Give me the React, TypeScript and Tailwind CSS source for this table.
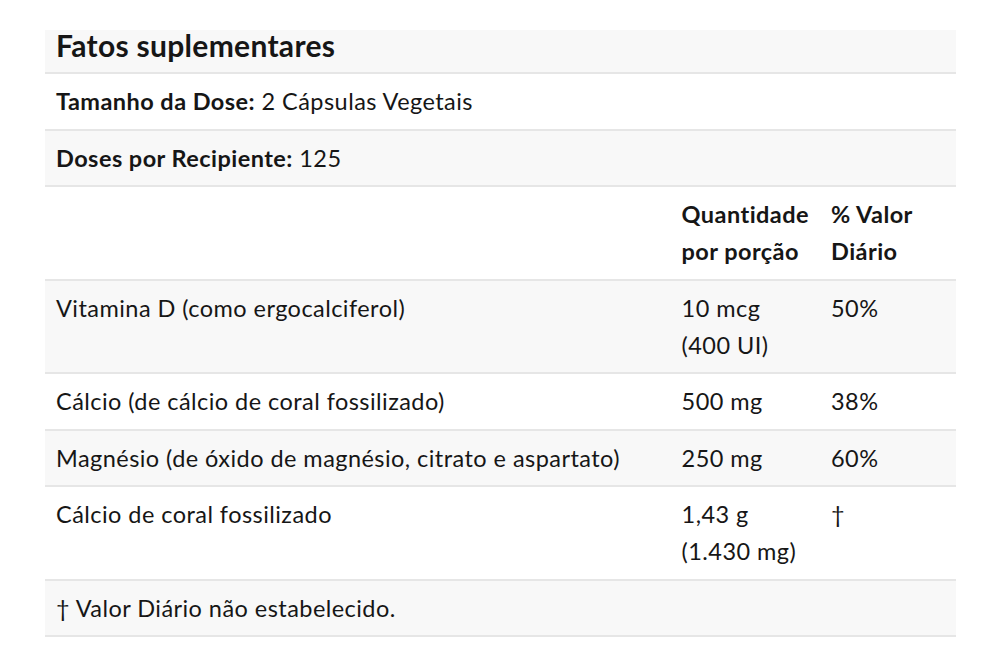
import React from "react";

interface Nutrient {
  name: string;
  amount: string[];
  dv: string;
}

const nutrients: Nutrient[] = [
  { name: "Vitamina D (como ergocalciferol)", amount: ["10 mcg", "(400 UI)"], dv: "50%" },
  { name: "Cálcio (de cálcio de coral fossilizado)", amount: ["500 mg"], dv: "38%" },
  { name: "Magnésio (de óxido de magnésio, citrato e aspartato)", amount: ["250 mg"], dv: "60%" },
  { name: "Cálcio de coral fossilizado", amount: ["1,43 g", "(1.430 mg)"], dv: "†" },
];

const cell = "px-[11px] pt-[9px] pb-[8.5px] align-top";

const App = () => {
  return (
    <main className="min-h-[670px] w-[1001px] bg-white pt-[30px] pl-[45px] font-['Lato','Liberation_Sans',sans-serif] text-[23.5px] leading-[37px] tracking-[0.45px] text-[#161616]">
      <table className="w-[911px] border-collapse">
        <colgroup>
          <col className="w-[626px]" />
          <col className="w-[149px]" />
          <col className="w-[136px]" />
        </colgroup>
        <tbody>
          <tr className="border-b-2 border-[#e6e6e6] bg-[#f8f8f8]">
            <td colSpan={3} className="h-[43px] px-[11px] align-top text-[30px] font-bold leading-[30px] tracking-[0.3px]">
              Fatos suplementares
            </td>
          </tr>
          <tr className="border-b-2 border-[#e6e6e6] bg-white">
            <td colSpan={3} className={cell}>
              <span className="font-bold">Tamanho da Dose:</span> 2 Cápsulas Vegetais
            </td>
          </tr>
          <tr className="border-b-2 border-[#e6e6e6] bg-[#f8f8f8]">
            <td colSpan={3} className={cell}>
              <span className="font-bold">Doses por Recipiente:</span> 125
            </td>
          </tr>
          <tr className="border-b-2 border-[#e6e6e6] bg-white font-bold">
            <td className={cell}></td>
            <td className={cell}>Quantidade por porção</td>
            <td className={cell}>% Valor Diário</td>
          </tr>
          {nutrients.map((n, i) => (
            <tr key={n.name} className={`border-b-2 border-[#e6e6e6] ${i % 2 === 0 ? "bg-[#f8f8f8]" : "bg-white"}`}>
              <td className={cell}>{n.name}</td>
              <td className={cell}>
                {n.amount.map((a) => (
                  <div key={a}>{a}</div>
                ))}
              </td>
              <td className={cell}>{n.dv}</td>
            </tr>
          ))}
          <tr className="border-b-2 border-[#e6e6e6] bg-[#f8f8f8]">
            <td colSpan={3} className={cell}>
              † Valor Diário não estabelecido.
            </td>
          </tr>
        </tbody>
      </table>
    </main>
  );
};

export default App;
